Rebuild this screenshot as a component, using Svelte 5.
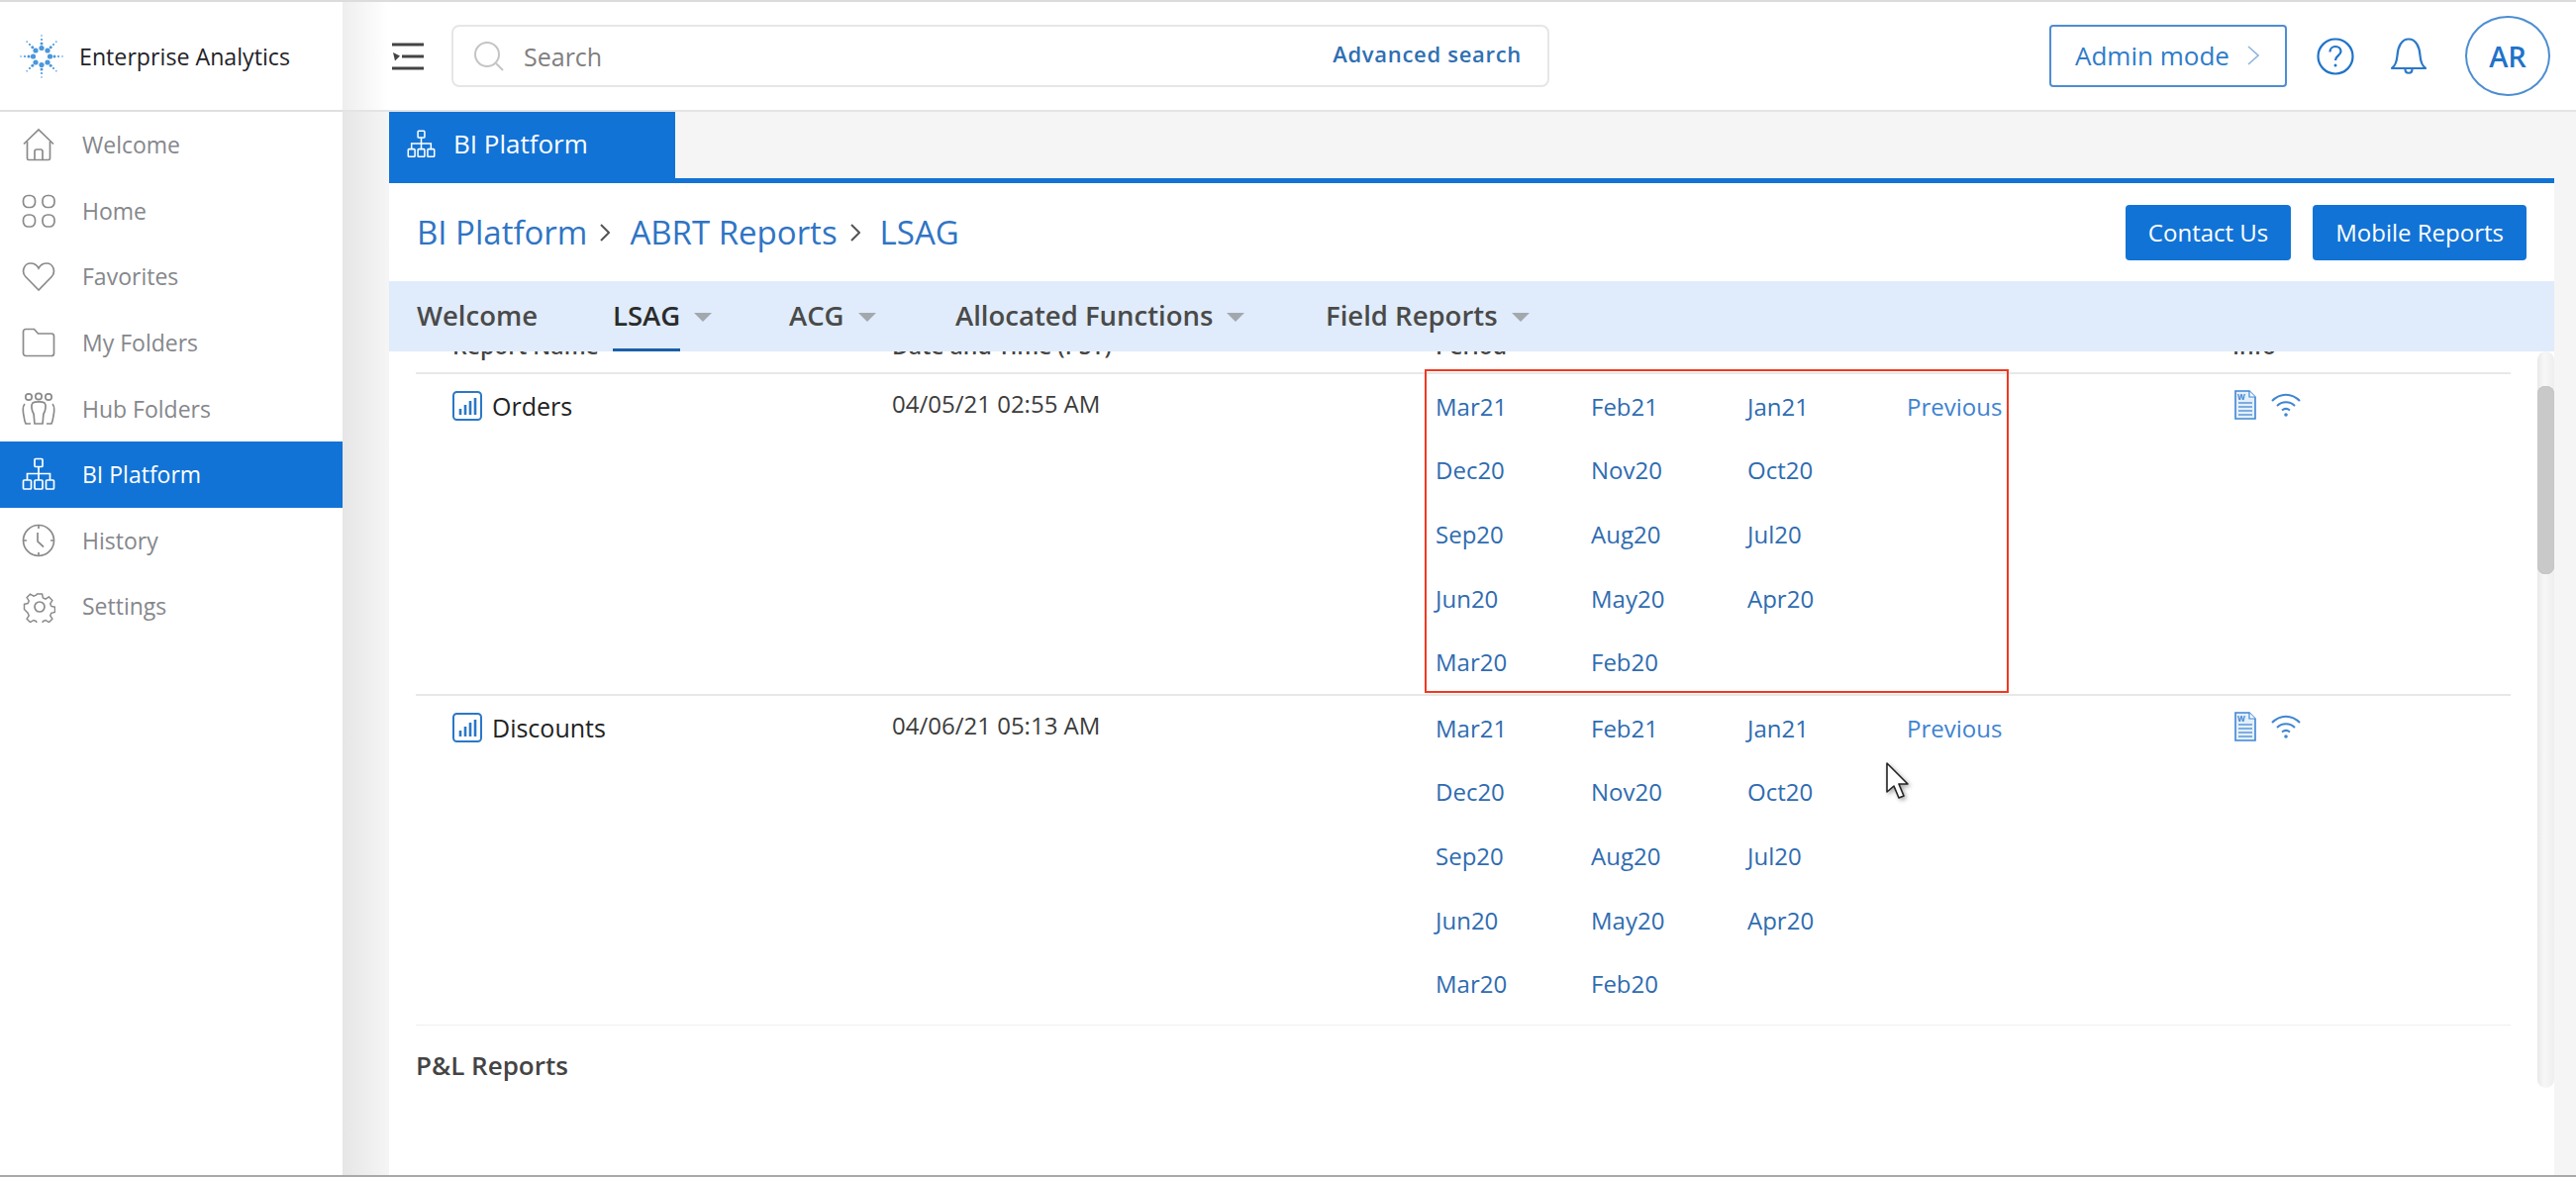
<script>
  const nav = [
    { label: 'Welcome', icon: 'home' },
    { label: 'Home', icon: 'grid' },
    { label: 'Favorites', icon: 'heart' },
    { label: 'My Folders', icon: 'folder' },
    { label: 'Hub Folders', icon: 'people' },
    { label: 'BI Platform', icon: 'tree', active: true },
    { label: 'History', icon: 'clock' },
    { label: 'Settings', icon: 'gear' }
  ];

  const icons = {
    home: '<path d="M2 16.5 17 2l15 14.5"/><path d="M5.5 14v17a1.5 1.5 0 0 0 1.5 1.5h20a1.5 1.5 0 0 0 1.5-1.5V14"/><path d="M13 32.5V24a2 2 0 0 1 2-2h4a2 2 0 0 1 2 2v8.5"/>',
    grid: '<rect x="1.5" y="1.5" width="12" height="12" rx="5"/><rect x="21" y="1.5" width="12" height="12" rx="5"/><rect x="1.5" y="21" width="12" height="12" rx="5"/><rect x="21" y="21" width="12" height="12" rx="5"/>',
    heart: '<path d="M17 31 3.8 17.5C-.5 13 1.8 4 9 4c3.6 0 6.4 2 8 5 1.6-3 4.4-5 8-5 7.2 0 9.500 9 5.200 13.500z"/>',
    folder: '<path d="M1.500 28V6a2.500 2.500 0 0 1 2.500-2.500h8.500l4 4.500H30a2.500 2.500 0 0 1 2.500 2.500V28a2.500 2.500 0 0 1-2.500 2.500H4A2.500 2.500 0 0 1 1.500 28z"/>',
    people: '<circle cx="7" cy="5" r="3.200"/><circle cx="17" cy="4.500" r="3.200"/><circle cx="27" cy="5" r="3.200"/><path d="M3 12c-2 2-2 7-1 12 .4 3 1 6 2 8h5"/><path d="M31 12c2 2 2 7 1 12-.4 3-1 6-2 8h-5"/><path d="M11 11c-2 2-1 8 1 11 .5 3 .5 7 1 10h8c.5-3 .5-7 1-10 2-3 3-9 1-11-2-1.500-10-1.500-12 0z"/>',
    tree: '<rect x="13" y="1.500" width="8" height="8" rx="1"/><rect x="1.500" y="23" width="8" height="9" rx="1"/><rect x="13" y="23" width="8" height="9" rx="1"/><rect x="24.500" y="23" width="8" height="9" rx="1"/><path d="M17 9.500V23M5.500 23v-6.500h23V23"/>',
    clock: '<circle cx="17" cy="17" r="15.500"/><path d="M17 1.500v3.500M17 29v3.500M1.500 17H5M29 17h3.500"/><path d="M16 9v9l6 5.500"/>',
    gear: '<circle cx="18" cy="18" r="5"/><path d="M15 3h6l1 4.500 3 1.300 4-2.500 4 4.200-2.500 3.800 1.300 3 4.200 1v6l-4.200 1-1.300 3 2.500 3.900-4 4-4-2.500-3 1.300-1 4.500h-6l-1-4.500-3-1.300-4 2.500-4-4 2.500-3.900-1.300-3L0 21v-6l4.200-1 1.300-3-2.500-3.800 4-4.200 4 2.500 3-1.300z" transform="translate(2.500 2.500) scale(.86)"/>'
  };

  // the spark in the logo: rays of shrinking dots
  const spark = [];
  for (let i = 0; i < 8; i++) {
    const a = (i * Math.PI) / 4;
    [[8.5, 2.6], [13, 1.5], [17, 1.1], [21, 0.8]].forEach(([r, s]) => {
      spark.push({ x: 23 + r * Math.cos(a), y: 23 + r * Math.sin(a), s });
    });
  }

  const tabs = [
    { label: 'Welcome', width: 198 },
    { label: 'LSAG', caret: true, current: true, width: 178 },
    { label: 'ACG', caret: true, width: 168 },
    { label: 'Allocated Functions', caret: true, width: 374 },
    { label: 'Field Reports', caret: true }
  ];

  const periods = [
    'Mar21', 'Feb21', 'Jan21', 'Previous',
    'Dec20', 'Nov20', 'Oct20', '',
    'Sep20', 'Aug20', 'Jul20', '',
    'Jun20', 'May20', 'Apr20', '',
    'Mar20', 'Feb20', '', ''
  ];

  const reports = [
    { name: 'Orders', date: '04/05/21 02:55 AM' },
    { name: 'Discounts', date: '04/06/21 05:13 AM', last: true }
  ];
</script>

<div class="app">
  <aside class="sidebar">
    <div class="brand">
      <svg class="logo" viewBox="0 0 46 46" width="46" height="46">
        {#each spark as d}
          <circle cx={d.x} cy={d.y} r={d.s} fill="#4a97dc" />
        {/each}
      </svg>
      <span>Enterprise Analytics</span>
    </div>
    <nav>
      {#each nav as item}
        <a class="nav-item" class:active={item.active} href="#top">
          <svg viewBox="0 0 34 34" width="34" height="34" fill="none" stroke="currentColor" stroke-width="1.7">
            {@html icons[item.icon]}
          </svg>
          <span>{item.label}</span>
        </a>
      {/each}
    </nav>
  </aside>

  <div class="main">
    <header class="topbar">
      <svg class="menu" viewBox="0 0 32 28" width="32" height="28">
        <path d="M0 2h32M10 14h22M0 26h32" stroke="#444" stroke-width="3" />
        <path d="M1 10l7 3.500-5 5z" fill="#444" />
      </svg>
      <div class="search">
        <svg viewBox="0 0 30 30" width="30" height="30" fill="none" stroke="#c4c4c4" stroke-width="2">
          <circle cx="13" cy="13" r="12" />
          <path d="M22 22l7 7" />
        </svg>
        <span class="placeholder">Search</span>
        <span class="advanced">Advanced search</span>
      </div>
      <button class="admin">
        Admin mode
        <svg viewBox="0 0 12 20" width="12" height="20" fill="none" stroke="#8fb4de" stroke-width="1.600"><path d="M1 1l10 9-10 9" /></svg>
      </button>
      <svg class="help" viewBox="0 0 38 38" width="38" height="38" fill="none" stroke="#1f73c9" stroke-width="2.200">
        <circle cx="19" cy="19" r="17.500" />
        <path d="M13.500 14.500c0-3.500 2.500-5.500 5.500-5.500s5.500 2 5.500 5c0 4-5.500 4.500-5.500 9" />
        <circle cx="19" cy="28" r="1.500" fill="#1f73c9" stroke="none" />
      </svg>
      <svg class="bell" viewBox="0 0 38 38" width="38" height="38" fill="none" stroke="#2a78c8" stroke-width="2.200">
        <path d="M2 31c4-3 5-7 5.500-13C8 9 12 1.500 19 1.500S30 9 30.500 18c.5 6 1.500 10 5.500 13z" stroke-linejoin="round" />
        <path d="M15.500 32c0 5 7 5 7 0" />
      </svg>
      <div class="avatar">AR</div>
    </header>

    <div class="workspace">
      <div class="tabstrip">
        <div class="tab">
          <svg viewBox="0 0 34 34" width="29" height="29" fill="none" stroke="#fff" stroke-width="1.800">
            {@html icons.tree}
          </svg>
          BI Platform
        </div>
      </div>

      <section class="panel">
        <div class="crumbbar">
          <div class="crumbs">
            <a href="#top">BI Platform</a>
            <svg viewBox="0 0 10 18" width="10" height="18" fill="none" stroke="#555" stroke-width="2"><path d="M1 1l8 8-8 8" /></svg>
            <a href="#top">ABRT Reports</a>
            <svg viewBox="0 0 10 18" width="10" height="18" fill="none" stroke="#555" stroke-width="2"><path d="M1 1l8 8-8 8" /></svg>
            <a href="#top">LSAG</a>
          </div>
          <div class="actions">
            <button>Contact Us</button>
            <button>Mobile Reports</button>
          </div>
        </div>

        <div class="tabs">
          {#each tabs as t}
            <div class="tab-item" class:current={t.current} style:width={t.width ? t.width + 'px' : null}>
              <span class="tab-label">{t.label}</span>
              {#if t.caret}<i class="caret"></i>{/if}
            </div>
          {/each}
        </div>

        <div class="scroller">
          <div class="content">
            <div class="row head">
              <div>Report Name</div>
              <div>Date and Time (PST)</div>
              <div>Period</div>
              <div>Info</div>
            </div>

            {#each reports as r}
              <div class="row" class:last={r.last}>
                <div class="name">
                  <svg viewBox="0 0 30 30" width="30" height="30" fill="none" stroke="#2a78c8" stroke-width="2">
                    <rect x="1" y="1" width="28" height="28" rx="3.500" />
                    <path d="M8 24v-6M13 24V14M18 24V10M23 24V7" stroke-width="2.600" />
                  </svg>
                  {r.name}
                </div>
                <div class="date">{r.date}</div>
                <div class="periods">
                  {#each periods as p}
                    <a href="#top" class:prev={p === 'Previous'}>{p}</a>
                  {/each}
                </div>
                <div class="info">
                  <svg viewBox="0 0 22 30" width="22" height="30">
                    <path d="M1 1h14l6 6v22H1z" fill="#e4effa" stroke="#3f86d2" stroke-width="1.600" />
                    <path d="M15 1v6h6" fill="#fff" stroke="#3f86d2" stroke-width="1.200" />
                    <text x="3" y="10" class="doc-w">W</text>
                    <path d="M4 13h14M4 17h14M4 21h14M4 25h14" stroke="#5b98d8" stroke-width="1.500" />
                  </svg>
                  <svg viewBox="0 0 30 24" width="30" height="24" fill="none" stroke="#3f86d2" stroke-width="2">
                    <path d="M1 8c8-8.500 20-8.500 28 0" />
                    <path d="M6 13c5-5 13-5 18 0" />
                    <path d="M11 17.500c2.500-2 5.500-2 8 0" />
                    <circle cx="15" cy="22" r="1.800" fill="#3f86d2" stroke="none" />
                  </svg>
                </div>
              </div>
            {/each}

            <h2>P&amp;L Reports</h2>

            <div class="highlight"></div>
            <svg class="cursor" viewBox="0 0 28 40" width="28" height="40">
              <path d="M2 1v29l7-6 5 12 5-2-5-12h9z" fill="#fff" stroke="#222" stroke-width="1.600" stroke-linejoin="round" />
            </svg>
          </div>
          <div class="scrollbar"><div class="thumb"></div></div>
        </div>
      </section>
    </div>
  </div>
</div>

<style>
  :global(body) {
    margin: 0;
    font-family: "Open Sans", "Liberation Sans", sans-serif;
    background: #f5f5f5;
  }

  a {
    text-decoration: none;
    color: inherit;
  }

  .app {
    display: flex;
    height: 100vh;
    box-sizing: border-box;
    border-top: 2px solid #dcdcdc;
    border-bottom: 2px solid #a9a9a9;
    overflow: hidden;
  }

  .sidebar {
    width: 346px;
    flex: none;
    background: #fff;
  }

  .brand {
    height: 109px;
    border-bottom: 2px solid #e0e0e0;
    display: flex;
    align-items: center;
    padding-left: 19px;
    gap: 15px;
    font-size: 23.2px;
    font-weight: 500;
    color: #1f2328;
  }

  .logo {
    flex: none;
  }

  .nav-item {
    display: flex;
    align-items: center;
    height: 66.6px;
    padding-left: 22px;
    gap: 27px;
    font-size: 23px;
    color: #85878c;
  }

  .nav-item svg {
    flex: none;
    color: #8a8a8a;
  }

  .nav-item.active {
    background: #1273d6;
    color: #fff;
  }

  .nav-item.active svg {
    color: #fff;
  }

  .main {
    flex: 1;
    min-width: 0;
    display: flex;
    flex-direction: column;
  }

  .topbar {
    height: 111px;
    flex: none;
    box-sizing: border-box;
    border-bottom: 2px solid #e4e4e4;
    background: linear-gradient(90deg, #eeeeee, #fff 46px);
    display: flex;
    align-items: center;
    padding: 0 26px 0 50px;
  }

  .menu {
    flex: none;
    margin-right: 28px;
  }

  .search {
    width: 1109px;
    height: 63px;
    box-sizing: border-box;
    border: 2px solid #e6e6e6;
    border-radius: 8px;
    display: flex;
    align-items: center;
    padding: 0 26px 0 21px;
    background: #fff;
  }

  .placeholder {
    margin-left: 20px;
    font-size: 25px;
    color: #808080;
  }

  .advanced {
    margin-left: auto;
    padding-bottom: 6px;
    font-size: 22px;
    font-weight: 600;
    letter-spacing: 0.7px;
    color: #2f6fb3;
  }

  .admin {
    margin-left: auto;
    width: 240px;
    height: 63px;
    display: flex;
    align-items: center;
    justify-content: space-between;
    box-sizing: border-box;
    padding: 0 26px 2px 24px;
    border: 2px solid #4d8ed2;
    border-radius: 4px;
    background: #fff;
    font: 26px "Open Sans", sans-serif;
    color: #2f7cc9;
  }

  .help {
    margin-left: 30px;
    flex: none;
  }

  .bell {
    margin-left: 36px;
    flex: none;
  }

  .avatar {
    margin-left: 38px;
    width: 86px;
    height: 81px;
    box-sizing: border-box;
    flex: none;
    border: 2px solid #4d8ed2;
    border-radius: 50%;
    display: flex;
    align-items: center;
    justify-content: center;
    font-size: 29px;
    font-weight: 600;
    color: #1f73c9;
  }

  .workspace {
    flex: 1;
    min-height: 0;
    display: flex;
    flex-direction: column;
    padding: 0 22px 0 47px;
    background: linear-gradient(90deg, #e6e6e6, #f5f5f5 46px);
  }

  .tabstrip {
    height: 72px;
    flex: none;
    box-sizing: border-box;
    border-bottom: 5px solid #1273d6;
  }

  .tab {
    width: 289px;
    height: 72px;
    box-sizing: border-box;
    background: #1273d6;
    display: flex;
    align-items: center;
    gap: 18px;
    padding: 0 0 8px 18px;
    font-size: 26px;
    color: #fff;
  }

  .panel {
    flex: 1;
    min-height: 0;
    display: flex;
    flex-direction: column;
    background: #fff;
  }

  .crumbbar {
    height: 99px;
    flex: none;
    display: flex;
    align-items: center;
    justify-content: space-between;
    padding: 0 28px 0 28px;
  }

  .crumbs {
    display: flex;
    align-items: center;
    font-size: 33px;
    color: #2f74c4;
  }

  .crumbs svg {
    margin: 0 20px 0 13px;
  }

  .actions {
    display: flex;
    gap: 22px;
  }

  .actions button {
    height: 56px;
    padding: 0 23px;
    border: none;
    border-radius: 4px;
    background: #1273d6;
    color: #fff;
    font: 24px "Open Sans", sans-serif;
  }

  .tabs {
    height: 71px;
    flex: none;
    position: relative;
    z-index: 2;
    background: #e0ecfb;
    display: flex;
    align-items: center;
    padding-left: 28px;
    font-size: 27.5px;
    font-weight: 600;
    color: #4a4a4a;
  }

  .tab-item {
    display: flex;
    align-items: center;
    gap: 14px;
    height: 100%;
    flex: none;
  }

  .tab-label {
    height: 100%;
    display: flex;
    align-items: center;
    box-sizing: border-box;
    padding-bottom: 2px;
  }

  .tab-item.current .tab-label {
    color: #2b2b2b;
    border-bottom: 3px solid #1a5fa8;
    padding-bottom: 0;
  }

  .caret {
    width: 0;
    height: 0;
    margin-top: 2px;
    border-left: 9px solid transparent;
    border-right: 9px solid transparent;
    border-top: 9px solid #a3a8ae;
  }

  .scroller {
    flex: 1;
    min-height: 0;
    display: flex;
  }

  .content {
    flex: 1;
    min-width: 0;
    position: relative;
    padding: 0 27px;
  }

  .row {
    display: grid;
    grid-template-columns: 481px 549px 805px 1fr;
    border-bottom: 2px solid #e8e8e8;
  }

  .row > :first-child {
    padding-left: 37px;
  }

  .head {
    height: 43px;
    margin-top: -20px;
    font-size: 23px;
    line-height: 28px;
    font-weight: 600;
    color: #444;
    box-sizing: border-box;
  }

  .row.last {
    padding-bottom: 9px;
    border-bottom: 1px solid #efefef;
  }

  .name {
    display: flex;
    align-items: center;
    gap: 10px;
    height: 64px;
    font-size: 25px;
    font-weight: 500;
    color: #222;
  }

  .date {
    line-height: 60px;
    font-size: 24px;
    color: #3c3c3c;
  }

  .periods {
    display: grid;
    grid-template-columns: 157px 158px 161px 1fr;
    grid-auto-rows: 64.6px;
    align-items: center;
    font-size: 24px;
    color: #2f6cb0;
  }

  .periods a.prev {
    color: #3f83d0;
  }

  .info {
    display: flex;
    gap: 15px;
    align-items: center;
    height: 62px;
    padding-left: 2px;
  }

  .doc-w {
    font: 700 8px "Open Sans", sans-serif;
    fill: #3f86d2;
  }

  h2 {
    margin: 24px 0 0;
    font-size: 26px;
    line-height: 33px;
    font-weight: 600;
    color: #444;
  }

  .highlight {
    position: absolute;
    left: 1046px;
    top: 18px;
    width: 590px;
    height: 327px;
    box-sizing: border-box;
    border: 2px solid #f0391f;
    pointer-events: none;
  }

  .cursor {
    position: absolute;
    left: 1511px;
    top: 415px;
    filter: drop-shadow(2px 2px 2px rgba(0, 0, 0, 0.35));
  }

  .scrollbar {
    width: 17px;
    height: 744px;
    flex: none;
    padding-top: 35px;
    box-sizing: border-box;
    border-radius: 9px;
    background: linear-gradient(90deg, #e9e9e9, #f7f7f7 40%, #eeeeee);
  }

  .thumb {
    height: 190px;
    border-radius: 8px;
    background: #c9c9c9;
    box-shadow: inset 0 0 1px #a0a0a0;
  }
</style>
